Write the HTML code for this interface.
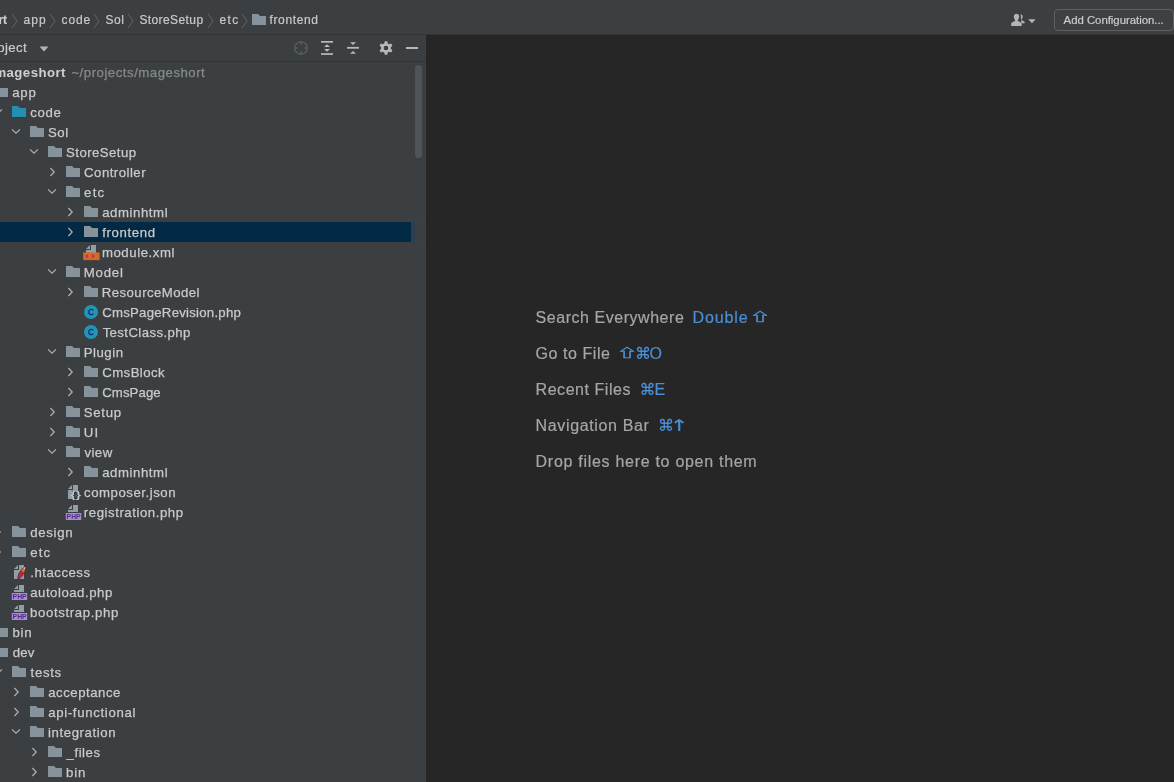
<!DOCTYPE html>
<html lang="en"><head><meta charset="utf-8"><title>mageshort</title>
<style>
html,body{margin:0;padding:0;background:#262626;}
body{width:1174px;height:782px;overflow:hidden;position:relative;font-family:"Liberation Sans","DejaVu Sans",sans-serif;color:#cacaca;}
#top{position:absolute;left:0;top:0;width:1174px;height:34px;background:#3c3f41;border-bottom:1px solid #323537;}
#top,#left,#editor{will-change:transform;}
#left{position:absolute;left:0;top:35px;width:426px;height:747px;background:#3c3f41;}
#tb{position:absolute;left:0;top:0;width:426px;height:26px;border-bottom:1px solid #323537;}
#editor{position:absolute;left:426px;top:35px;width:748px;height:747px;background:#262626;}
.row{position:absolute;left:0;width:411px;height:20px;font-size:13.2px;line-height:20px;white-space:nowrap;}
.row.sel{background:#022a44;}
.row span{position:absolute;top:0.7px;-webkit-text-stroke:0.25px currentColor;}
.ic{position:absolute;top:2px;}
.ar{position:absolute;top:1.8px;}
.bc{position:absolute;top:12.3px;font-size:12px;line-height:16px;white-space:nowrap;color:#cacaca;-webkit-text-stroke:0.2px currentColor;}
.sep{position:absolute;top:12.6px;}
.hint{position:absolute;left:109.5px;font-size:16px;line-height:20px;white-space:nowrap;color:#a6a6a6;-webkit-text-stroke:0.2px currentColor;}
.hint b{font-weight:normal;color:#4a8fd6;position:absolute;top:0;}
.sym{font-family:"DejaVu Sans",sans-serif;}
.hint b.shift{top:1.2px;}
.up{font-family:"DejaVu Sans",sans-serif;display:inline-block;transform-origin:100% 50%;transform:scaleX(1.4);}
.shift{font-family:"Noto Sans CJK JP","DejaVu Sans",sans-serif;display:inline-block;transform-origin:0 0;transform:scale(1.26,0.69);-webkit-text-stroke:0.6px currentColor;}
</style></head><body>

<div id="top">
<span class="bc" style="right:1166.9px;font-weight:bold;">mageshort</span>
<svg class="sep" style="left:10.8px" width="7" height="16" viewBox="0 0 7 16"><path d="M1 1l5 7-5 7" fill="none" stroke="#66696b" stroke-width="0.9"/></svg>
<span class="bc" style="left:23.50px;letter-spacing:1.040px;">app</span>
<svg class="sep" style="left:48.8px" width="7" height="16" viewBox="0 0 7 16"><path d="M1 1l5 7-5 7" fill="none" stroke="#66696b" stroke-width="0.9"/></svg>
<span class="bc" style="left:61.60px;letter-spacing:0.893px;">code</span>
<svg class="sep" style="left:92.8px" width="7" height="16" viewBox="0 0 7 16"><path d="M1 1l5 7-5 7" fill="none" stroke="#66696b" stroke-width="0.9"/></svg>
<span class="bc" style="left:105.50px;letter-spacing:0.529px;">Sol</span>
<svg class="sep" style="left:126.6px" width="7" height="16" viewBox="0 0 7 16"><path d="M1 1l5 7-5 7" fill="none" stroke="#66696b" stroke-width="0.9"/></svg>
<span class="bc" style="left:139.40px;letter-spacing:0.407px;">StoreSetup</span>
<svg class="sep" style="left:206.6px" width="7" height="16" viewBox="0 0 7 16"><path d="M1 1l5 7-5 7" fill="none" stroke="#66696b" stroke-width="0.9"/></svg>
<span class="bc" style="left:219.50px;letter-spacing:1.396px;">etc</span>
<svg class="sep" style="left:240.6px" width="7" height="16" viewBox="0 0 7 16"><path d="M1 1l5 7-5 7" fill="none" stroke="#66696b" stroke-width="0.9"/></svg>
<svg style="position:absolute;left:250.7px;top:12.2px" width="16" height="16" viewBox="0 0 16 16"><path fill="#87939b" d="M1 2h6l2 2h6v9H1z"/></svg>
<span class="bc" style="left:269.50px;letter-spacing:0.624px;">frontend</span>
<svg style="position:absolute;left:1010px;top:12px" width="16" height="16" viewBox="0 0 16 16"><g fill="#b4b4b4"><path d="M10.6 2.2c1.3 0 2.1 1 2.1 2.4 0 1.200-.6 2.200-1.200 2.700v.8l2.600 1.400c.4.200.6.600.6 1v.7h-3.200"/><path d="M6.500 1.800c1.600 0 2.600 1.200 2.600 2.900 0 1.400-.7 2.600-1.400 3.200v.9l3.200 1.600c.5.300.8.800.8 1.300v2.300H1.200v-2.300c0-.5.300-1 .8-1.300l3.200-1.600v-.9c-.7-.6-1.400-1.800-1.400-3.200 0-1.700 1.100-2.900 2.700-2.900z"/></g></svg>
<svg style="position:absolute;left:1027.9px;top:18.8px" width="8" height="5" viewBox="0 0 8 5"><path fill="#b4b4b4" d="M0.300 0.300h7.400L4 4.300z"/></svg>
<div style="position:absolute;left:1054px;top:9px;width:117.5px;height:19.5px;border:1px solid #5c6062;border-radius:4px;background:#3e4143;box-sizing:content-box"></div>
<span style="position:absolute;left:1063.6px;top:12.2px;font-size:11.4px;line-height:16px;letter-spacing:-0.03px;color:#cccccc;white-space:nowrap;-webkit-text-stroke:0.2px currentColor">Add Configuration...</span>
</div>
<div id="left"><div id="tb">
<span style="position:absolute;left:-16.8px;top:4.3px;font-size:13.2px;line-height:18px;color:#cacaca;letter-spacing:0.4px;-webkit-text-stroke:0.2px currentColor">Project</span>
<svg style="position:absolute;left:39px;top:11.1px" width="10" height="6" viewBox="0 0 10 6"><path fill="#b4b4b4" d="M0.500 0.500h9L5 5.500z"/></svg>
<svg style="position:absolute;left:293px;top:5px" width="16" height="16" viewBox="0 0 16 16"><g fill="none" stroke="#5f6467" stroke-width="1.1"><circle cx="8" cy="8" r="6.300"/><path d="M8 1.700v3.300M8 11v3.300M1.700 8h3.300M11 8h3.300"/></g></svg>
<svg style="position:absolute;left:319px;top:5px" width="16" height="16" viewBox="0 0 16 16"><g fill="#b8b8b8"><rect x="2" y="1" width="12" height="1.700"/><rect x="2" y="13.200" width="12" height="1.700"/><path d="M5 6.900h6L8 4.300zM5 9.100h6L8 11.700z"/></g></svg>
<svg style="position:absolute;left:345px;top:5px" width="16" height="16" viewBox="0 0 16 16"><g fill="#b8b8b8"><rect x="2" y="6.900" width="12" height="1.800"/><path d="M5 2.200h6L8 5zM5 13.700h6L8 11z"/></g></svg>
<svg style="position:absolute;left:378.200px;top:5px" width="16" height="16" viewBox="0 0 16 16"><path fill="#b8b8b8" fill-rule="evenodd" d="M6.32 3.40L6.76 1.31L9.24 1.31L9.68 3.40L11.15 4.25L13.17 3.58L14.41 5.73L12.83 7.15L12.83 8.85L14.41 10.27L13.17 12.42L11.15 11.75L9.68 12.60L9.24 14.69L6.76 14.69L6.32 12.60L4.85 11.75L2.83 12.42L1.59 10.27L3.17 8.85L3.17 7.15L1.59 5.73L2.83 3.58L4.85 4.25zM8 5.7a2.3 2.3 0 1 0 0 4.6a2.3 2.3 0 1 0 0 -4.6z"/></svg>
<div style="position:absolute;left:406px;top:12px;width:12px;height:1.700px;background:#b8b8b8"></div>
</div>
<div class="row" style="top:27px"><span style="left:-5.6px;font-weight:bold;color:#d0d0d0;letter-spacing:0.45px;-webkit-text-stroke:0">mageshort</span><span style="left:71.4px;color:#868a8c;letter-spacing:0.52px">~/projects/mageshort</span></div>
<div class="row" style="top:47px"><svg class="ic" style="left:-6.9px" width="16" height="16" viewBox="0 0 16 16"><path fill="#87939b" d="M1 2h4.500l2 2H15v9H1z"/></svg><span style="left:12.16px;letter-spacing:0.875px">app</span></div>
<div class="row" style="top:67px"><svg class="ar" style="left:-10px" width="16" height="16" viewBox="0 0 16 16"><path d="M4 5.400L8 9.200l4-3.800" fill="none" stroke="#b0b0b0" stroke-width="1.200"/></svg><svg class="ic" style="left:11.1px" width="16" height="17" viewBox="0 0 16 17"><path fill="#2390b2" d="M1 2h6l2 2h6v9H1z"/><rect x="3.500" y="13" width="9" height="0.800" fill="#0a3a8a"/></svg><span style="left:30.21px;letter-spacing:0.679px">code</span></div>
<div class="row" style="top:87px"><svg class="ar" style="left:8px" width="16" height="16" viewBox="0 0 16 16"><path d="M4 5.400L8 9.200l4-3.800" fill="none" stroke="#b0b0b0" stroke-width="1.200"/></svg><svg class="ic" style="left:29.1px" width="16" height="16" viewBox="0 0 16 16"><path fill="#87939b" d="M1 2h6l2 2h6v9H1z"/></svg><span style="left:47.98px;letter-spacing:0.518px">Sol</span></div>
<div class="row" style="top:107px"><svg class="ar" style="left:26px" width="16" height="16" viewBox="0 0 16 16"><path d="M4 5.400L8 9.200l4-3.800" fill="none" stroke="#b0b0b0" stroke-width="1.200"/></svg><svg class="ic" style="left:47.1px" width="16" height="16" viewBox="0 0 16 16"><path fill="#87939b" d="M1 2h6l2 2h6v9H1z"/></svg><span style="left:66.08px;letter-spacing:0.436px">StoreSetup</span></div>
<div class="row" style="top:127px"><svg class="ar" style="left:44.7px" width="16" height="16" viewBox="0 0 16 16"><path d="M5.400 4L9.200 8l-3.800 4" fill="none" stroke="#b0b0b0" stroke-width="1.200"/></svg><svg class="ic" style="left:65.1px" width="16" height="16" viewBox="0 0 16 16"><path fill="#87939b" d="M1 2h6l2 2h6v9H1z"/></svg><span style="left:84.09px;letter-spacing:0.481px">Controller</span></div>
<div class="row" style="top:147px"><svg class="ar" style="left:44px" width="16" height="16" viewBox="0 0 16 16"><path d="M4 5.400L8 9.200l4-3.800" fill="none" stroke="#b0b0b0" stroke-width="1.200"/></svg><svg class="ic" style="left:65.1px" width="16" height="16" viewBox="0 0 16 16"><path fill="#87939b" d="M1 2h6l2 2h6v9H1z"/></svg><span style="left:84.08px;letter-spacing:1.217px">etc</span></div>
<div class="row" style="top:167px"><svg class="ar" style="left:62.7px" width="16" height="16" viewBox="0 0 16 16"><path d="M5.400 4L9.200 8l-3.800 4" fill="none" stroke="#b0b0b0" stroke-width="1.200"/></svg><svg class="ic" style="left:83.1px" width="16" height="16" viewBox="0 0 16 16"><path fill="#87939b" d="M1 2h6l2 2h6v9H1z"/></svg><span style="left:102.16px;letter-spacing:0.573px">adminhtml</span></div>
<div class="row sel" style="top:187px"><svg class="ar" style="left:62.7px" width="16" height="16" viewBox="0 0 16 16"><path d="M5.400 4L9.200 8l-3.800 4" fill="none" stroke="#b0b0b0" stroke-width="1.200"/></svg><svg class="ic" style="left:83.1px" width="16" height="16" viewBox="0 0 16 16"><path fill="#87939b" d="M1 2h6l2 2h6v9H1z"/></svg><span style="left:102.16px;letter-spacing:0.639px">frontend</span></div>
<div class="row" style="top:207px"><svg class="ic" style="left:83.1px" width="17" height="17" viewBox="0 0 17 17"><path fill="#929ea6" d="M7 1L3 5h4z"/><path fill="#929ea6" d="M8 1h5v8H3V6h5z"/><rect x="0.200" y="8.400" width="16.400" height="7.700" fill="#d8682a"/><path d="M4.800 10.700L3.200 12.200l1.600 1.500M9.200 10.700l1.600 1.500-1.600 1.500" fill="none" stroke="#b0207a" stroke-width="1.100"/></svg><span style="left:101.92px;letter-spacing:0.565px">module.xml</span></div>
<div class="row" style="top:227px"><svg class="ar" style="left:44px" width="16" height="16" viewBox="0 0 16 16"><path d="M4 5.400L8 9.200l4-3.800" fill="none" stroke="#b0b0b0" stroke-width="1.200"/></svg><svg class="ic" style="left:65.1px" width="16" height="16" viewBox="0 0 16 16"><path fill="#87939b" d="M1 2h6l2 2h6v9H1z"/></svg><span style="left:83.64px;letter-spacing:0.851px">Model</span></div>
<div class="row" style="top:247px"><svg class="ar" style="left:62.7px" width="16" height="16" viewBox="0 0 16 16"><path d="M5.400 4L9.200 8l-3.800 4" fill="none" stroke="#b0b0b0" stroke-width="1.200"/></svg><svg class="ic" style="left:83.1px" width="16" height="16" viewBox="0 0 16 16"><path fill="#87939b" d="M1 2h6l2 2h6v9H1z"/></svg><span style="left:101.82px;letter-spacing:0.440px">ResourceModel</span></div>
<div class="row" style="top:267px"><svg class="ic" style="left:83.1px" width="16" height="16" viewBox="0 0 16 16"><circle cx="8" cy="8" r="7" fill="#2196b4"/><path d="M10.300 9.500A2.500 2.700 0 1 1 10.300 6.500" fill="none" stroke="#0b2f7e" stroke-width="1.300"/></svg><span style="left:102.23px;letter-spacing:0.248px">CmsPageRevision.php</span></div>
<div class="row" style="top:287px"><svg class="ic" style="left:83.1px" width="16" height="16" viewBox="0 0 16 16"><circle cx="8" cy="8" r="7" fill="#2196b4"/><path d="M10.300 9.500A2.500 2.700 0 1 1 10.300 6.500" fill="none" stroke="#0b2f7e" stroke-width="1.300"/></svg><span style="left:102.63px;letter-spacing:0.399px">TestClass.php</span></div>
<div class="row" style="top:307px"><svg class="ar" style="left:44px" width="16" height="16" viewBox="0 0 16 16"><path d="M4 5.400L8 9.200l4-3.800" fill="none" stroke="#b0b0b0" stroke-width="1.200"/></svg><svg class="ic" style="left:65.1px" width="16" height="16" viewBox="0 0 16 16"><path fill="#87939b" d="M1 2h6l2 2h6v9H1z"/></svg><span style="left:83.64px;letter-spacing:0.537px">Plugin</span></div>
<div class="row" style="top:327px"><svg class="ar" style="left:62.7px" width="16" height="16" viewBox="0 0 16 16"><path d="M5.400 4L9.200 8l-3.800 4" fill="none" stroke="#b0b0b0" stroke-width="1.200"/></svg><svg class="ic" style="left:83.1px" width="16" height="16" viewBox="0 0 16 16"><path fill="#87939b" d="M1 2h6l2 2h6v9H1z"/></svg><span style="left:102.23px;letter-spacing:0.436px">CmsBlock</span></div>
<div class="row" style="top:347px"><svg class="ar" style="left:62.7px" width="16" height="16" viewBox="0 0 16 16"><path d="M5.400 4L9.200 8l-3.800 4" fill="none" stroke="#b0b0b0" stroke-width="1.200"/></svg><svg class="ic" style="left:83.1px" width="16" height="16" viewBox="0 0 16 16"><path fill="#87939b" d="M1 2h6l2 2h6v9H1z"/></svg><span style="left:102.23px;letter-spacing:0.096px">CmsPage</span></div>
<div class="row" style="top:367px"><svg class="ar" style="left:44.7px" width="16" height="16" viewBox="0 0 16 16"><path d="M5.400 4L9.200 8l-3.800 4" fill="none" stroke="#b0b0b0" stroke-width="1.200"/></svg><svg class="ic" style="left:65.1px" width="16" height="16" viewBox="0 0 16 16"><path fill="#87939b" d="M1 2h6l2 2h6v9H1z"/></svg><span style="left:83.84px;letter-spacing:0.708px">Setup</span></div>
<div class="row" style="top:387px"><svg class="ar" style="left:44.7px" width="16" height="16" viewBox="0 0 16 16"><path d="M5.400 4L9.200 8l-3.800 4" fill="none" stroke="#b0b0b0" stroke-width="1.200"/></svg><svg class="ic" style="left:65.1px" width="16" height="16" viewBox="0 0 16 16"><path fill="#87939b" d="M1 2h6l2 2h6v9H1z"/></svg><span style="left:83.69px;letter-spacing:1.413px">UI</span></div>
<div class="row" style="top:407px"><svg class="ar" style="left:44px" width="16" height="16" viewBox="0 0 16 16"><path d="M4 5.400L8 9.200l4-3.800" fill="none" stroke="#b0b0b0" stroke-width="1.200"/></svg><svg class="ic" style="left:65.1px" width="16" height="16" viewBox="0 0 16 16"><path fill="#87939b" d="M1 2h6l2 2h6v9H1z"/></svg><span style="left:84.51px;letter-spacing:0.425px">view</span></div>
<div class="row" style="top:427px"><svg class="ar" style="left:62.7px" width="16" height="16" viewBox="0 0 16 16"><path d="M5.400 4L9.200 8l-3.800 4" fill="none" stroke="#b0b0b0" stroke-width="1.200"/></svg><svg class="ic" style="left:83.1px" width="16" height="16" viewBox="0 0 16 16"><path fill="#87939b" d="M1 2h6l2 2h6v9H1z"/></svg><span style="left:102.16px;letter-spacing:0.573px">adminhtml</span></div>
<div class="row" style="top:447px"><svg class="ic" style="left:65.1px" width="17" height="17" viewBox="0 0 17 17"><path fill="#929ea6" d="M7 1L3 5h4z"/><path fill="#929ea6" d="M8 1h5v6H7v8H3V6h5z"/><text x="5.600" y="14.300" font-family="Liberation Sans, sans-serif" font-weight="bold" font-size="9.500" fill="#c2cad0" textLength="10.400" lengthAdjust="spacingAndGlyphs">{}</text><rect x="10.400" y="10.800" width="1" height="1.600" fill="#4a7f96"/></svg><span style="left:84.09px;letter-spacing:0.533px">composer.json</span></div>
<div class="row" style="top:467px"><svg class="ic" style="left:65.1px" width="17" height="17" viewBox="0 0 17 17"><path fill="#929ea6" d="M7 1L3 5h4z"/><path fill="#929ea6" d="M8 1h5v7H3V6h5z"/><rect x="0.800" y="9" width="15.400" height="7" fill="#ad8ad6"/><text x="1.600" y="15" font-family="Liberation Sans, sans-serif" font-weight="bold" font-size="6.800" fill="#4f2f88" textLength="14" lengthAdjust="spacingAndGlyphs">PHP</text></svg><span style="left:83.83px;letter-spacing:0.557px">registration.php</span></div>
<div class="row" style="top:487px"><svg class="ar" style="left:-9.3px" width="16" height="16" viewBox="0 0 16 16"><path d="M5.400 4L9.200 8l-3.800 4" fill="none" stroke="#b0b0b0" stroke-width="1.200"/></svg><svg class="ic" style="left:11.1px" width="16" height="16" viewBox="0 0 16 16"><path fill="#87939b" d="M1 2h6l2 2h6v9H1z"/></svg><span style="left:30.24px;letter-spacing:0.709px">design</span></div>
<div class="row" style="top:507px"><svg class="ar" style="left:-9.3px" width="16" height="16" viewBox="0 0 16 16"><path d="M5.400 4L9.200 8l-3.800 4" fill="none" stroke="#b0b0b0" stroke-width="1.200"/></svg><svg class="ic" style="left:11.1px" width="16" height="16" viewBox="0 0 16 16"><path fill="#87939b" d="M1 2h6l2 2h6v9H1z"/></svg><span style="left:30.21px;letter-spacing:1.154px">etc</span></div>
<div class="row" style="top:527px"><svg class="ic" style="left:11.1px" width="17" height="17" viewBox="0 0 17 17"><path fill="#929ea6" d="M7 1L3 5h4z"/><path fill="#929ea6" d="M8 1h5v14H3V6h5z"/><path d="M6.300 15.200C6 11 9.500 4.500 14.800 2.300c.8 4.500-3 10.500-6.500 12.700z" fill="#3c3f41"/><path d="M7 14.600C7 11 10 5.500 14.200 3c.3 4-2.700 9.300-5.700 11.400z" fill="#c8203c"/><path d="M14.200 3c-1.600 1-2.900 2.300-3.900 3.800l2.600 1.400c.9-1.700 1.400-3.500 1.300-5.200z" fill="#e8781e"/><path d="M14.200 3c-.6.400-1.200.8-1.700 1.300l1.500 1c.2-.8.300-1.600.2-2.300z" fill="#f0d078"/><path d="M7 14.600c0-.9.200-1.900.5-2.900l1.800 1.500c-.3.400-.5.600-.8.900z" fill="#8a3070"/></svg><span style="left:30.22px;letter-spacing:0.516px">.htaccess</span></div>
<div class="row" style="top:547px"><svg class="ic" style="left:11.1px" width="17" height="17" viewBox="0 0 17 17"><path fill="#929ea6" d="M7 1L3 5h4z"/><path fill="#929ea6" d="M8 1h5v7H3V6h5z"/><rect x="0.800" y="9" width="15.400" height="7" fill="#ad8ad6"/><text x="1.600" y="15" font-family="Liberation Sans, sans-serif" font-weight="bold" font-size="6.800" fill="#4f2f88" textLength="14" lengthAdjust="spacingAndGlyphs">PHP</text></svg><span style="left:30.16px;letter-spacing:0.529px">autoload.php</span></div>
<div class="row" style="top:567px"><svg class="ic" style="left:11.1px" width="17" height="17" viewBox="0 0 17 17"><path fill="#929ea6" d="M7 1L3 5h4z"/><path fill="#929ea6" d="M8 1h5v7H3V6h5z"/><rect x="0.800" y="9" width="15.400" height="7" fill="#ad8ad6"/><text x="1.600" y="15" font-family="Liberation Sans, sans-serif" font-weight="bold" font-size="6.800" fill="#4f2f88" textLength="14" lengthAdjust="spacingAndGlyphs">PHP</text></svg><span style="left:29.99px;letter-spacing:0.633px">bootstrap.php</span></div>
<div class="row" style="top:587px"><svg class="ic" style="left:-6.9px" width="16" height="16" viewBox="0 0 16 16"><path fill="#87939b" d="M1 2h4.500l2 2H15v9H1z"/></svg><span style="left:12.45px;letter-spacing:0.806px">bin</span></div>
<div class="row" style="top:607px"><svg class="ic" style="left:-6.9px" width="16" height="16" viewBox="0 0 16 16"><path fill="#87939b" d="M1 2h4.500l2 2H15v9H1z"/></svg><span style="left:12.76px;letter-spacing:0.180px">dev</span></div>
<div class="row" style="top:627px"><svg class="ar" style="left:-10px" width="16" height="16" viewBox="0 0 16 16"><path d="M4 5.400L8 9.200l4-3.800" fill="none" stroke="#b0b0b0" stroke-width="1.200"/></svg><svg class="ic" style="left:11.1px" width="16" height="16" viewBox="0 0 16 16"><path fill="#87939b" d="M1 2h6l2 2h6v9H1z"/></svg><span style="left:30.61px;letter-spacing:0.658px">tests</span></div>
<div class="row" style="top:647px"><svg class="ar" style="left:8.7px" width="16" height="16" viewBox="0 0 16 16"><path d="M5.400 4L9.200 8l-3.800 4" fill="none" stroke="#b0b0b0" stroke-width="1.200"/></svg><svg class="ic" style="left:29.1px" width="16" height="16" viewBox="0 0 16 16"><path fill="#87939b" d="M1 2h6l2 2h6v9H1z"/></svg><span style="left:48.16px;letter-spacing:0.530px">acceptance</span></div>
<div class="row" style="top:667px"><svg class="ar" style="left:8.7px" width="16" height="16" viewBox="0 0 16 16"><path d="M5.400 4L9.200 8l-3.800 4" fill="none" stroke="#b0b0b0" stroke-width="1.200"/></svg><svg class="ic" style="left:29.1px" width="16" height="16" viewBox="0 0 16 16"><path fill="#87939b" d="M1 2h6l2 2h6v9H1z"/></svg><span style="left:48.16px;letter-spacing:0.678px">api-functional</span></div>
<div class="row" style="top:687px"><svg class="ar" style="left:8px" width="16" height="16" viewBox="0 0 16 16"><path d="M4 5.400L8 9.200l4-3.800" fill="none" stroke="#b0b0b0" stroke-width="1.200"/></svg><svg class="ic" style="left:29.1px" width="16" height="16" viewBox="0 0 16 16"><path fill="#87939b" d="M1 2h6l2 2h6v9H1z"/></svg><span style="left:48.01px;letter-spacing:0.594px">integration</span></div>
<div class="row" style="top:707px"><svg class="ar" style="left:26.7px" width="16" height="16" viewBox="0 0 16 16"><path d="M5.400 4L9.200 8l-3.800 4" fill="none" stroke="#b0b0b0" stroke-width="1.200"/></svg><svg class="ic" style="left:47.1px" width="16" height="16" viewBox="0 0 16 16"><path fill="#87939b" d="M1 2h6l2 2h6v9H1z"/></svg><span style="left:66.62px;letter-spacing:0.515px">_files</span></div>
<div class="row" style="top:727px"><svg class="ar" style="left:26.7px" width="16" height="16" viewBox="0 0 16 16"><path d="M5.400 4L9.200 8l-3.800 4" fill="none" stroke="#b0b0b0" stroke-width="1.200"/></svg><svg class="ic" style="left:47.1px" width="16" height="16" viewBox="0 0 16 16"><path fill="#87939b" d="M1 2h6l2 2h6v9H1z"/></svg><span style="left:66.05px;letter-spacing:0.907px">bin</span></div>
<div style="position:absolute;left:414.5px;top:30px;width:7.5px;height:93px;border-radius:4px;background:#505456"></div>
<div style="position:absolute;left:411px;top:186.500px;width:4px;height:21px;background:#2e3f4b"></div>
<div style="position:absolute;left:415px;top:186.300px;width:11px;height:1.400px;background:#34434d"></div>
<div style="position:absolute;left:415px;top:206.400px;width:11px;height:1.400px;background:#34434d"></div>
</div>
<div id="editor">
<div class="hint" style="top:272.5px;left:0"><span style="position:absolute;left:109.60px;letter-spacing:0.537px">Search Everywhere</span><b style="left:266.50px;letter-spacing:0.880px">Double</b><b class="shift" style="left:323.70px">⇧</b></div>
<div class="hint" style="top:308.5px;left:0"><span style="position:absolute;left:109.60px;letter-spacing:0.560px">Go to File</span><b class="shift" style="left:190.70px">⇧</b><b class="sym" style="left:209.00px">⌘</b><b style="left:223.50px;letter-spacing:0.354px">O</b></div>
<div class="hint" style="top:344.5px;left:0"><span style="position:absolute;left:109.60px;letter-spacing:0.535px">Recent Files</span><b class="sym" style="left:213.50px">⌘</b><b style="left:228.40px;letter-spacing:-0.471px">E</b></div>
<div class="hint" style="top:380.5px;left:0"><span style="position:absolute;left:109.60px;letter-spacing:0.635px">Navigation Bar</span><b class="sym" style="left:231.90px">⌘</b><b class="up" style="left:248.90px">↑</b></div>
<div class="hint" style="top:416.5px;left:0"><span style="position:absolute;left:109.60px;letter-spacing:0.711px">Drop files here to open them</span></div>
</div>
</body></html>
